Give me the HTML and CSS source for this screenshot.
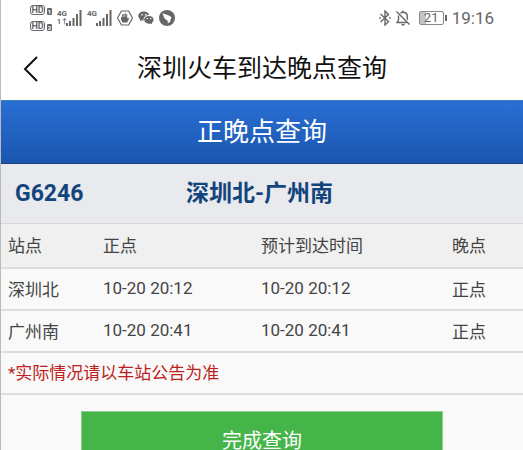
FILE: index.html
```html
<!DOCTYPE html>
<html lang="zh-CN">
<head>
  <meta charset="UTF-8">
  <meta name="viewport" content="width=device-width, initial-scale=1.0">
  <title>深圳火车到达晚点查询</title>
  <link rel="stylesheet" href="styles.css">
</head>
<body>

<div class="status-bar">
  <div class="status-group">
    <!-- HD voice, SIM 1 and 2 -->
    <div class="hd-list">
      <div class="hd"><span class="hd-label">HD</span><span class="hd-sim">1</span></div>
      <div class="hd"><span class="hd-label">HD</span><span class="hd-sim">2</span></div>
    </div>
    <div class="signal">
      <div class="net"><span>4G</span><span class="net-data">1↑</span></div>
      <svg width="16" height="16" viewBox="0 0 16 16" fill="#666"><path d="M0 13h2v3H0zM3 11h2v5H3zM6.500 8h2v8h-2zM10 4h2v12h-2zM13.500 0h2v16h-2z"/></svg>
    </div>
    <div class="signal">
      <div class="net"><span>4G</span></div>
      <svg width="16" height="16" viewBox="0 0 16 16" fill="#666"><path d="M0 13h2v3H0zM3 11h2v5H3zM6.500 8h2v8h-2zM10 4h2v12h-2zM13.500 0h2v16h-2z"/></svg>
    </div>
    <!-- hand -->
    <svg width="16" height="16" viewBox="0 0 16 16"><path d="M4.400 1h7.200L15.500 8l-3.900 7H4.400L.5 8z" fill="none" stroke="#666" stroke-width="1.200" stroke-linejoin="round"/><path d="M5.500 12.500C4.500 11.300 4 9.800 4 7.500c0-.8.900-.8 1.100 0V4.800c0-.6.900-.6.900 0V7h.4V3.900c0-.7 1-.7 1 0V7h.4V3.700c0-.7 1-.7 1 0V7h.4V4.300c0-.7 1-.7 1 0v4.200c.5-1 1.800-1.200 1.700-.2-.3 1.700-.8 3.200-1.800 4.200z" fill="#666"/></svg>
    <!-- wechat -->
    <svg width="16" height="14" viewBox="0 0 16 14" fill="#666"><path d="M6 .5C2.700.5.3 2.500.3 5c0 1.500.8 2.700 2 3.500L1.800 10.200l2-1c.6.2 1.200.3 1.900.3C5 6.600 7.500 4 11.300 4.100 10.700 2 8.600.5 6 .5z"/><path d="M10.900 4.900c-2.700 0-4.700 1.700-4.700 3.900s2 3.900 4.700 3.900c.6 0 1.100-.1 1.600-.2l1.700.9-.4-1.500c1.100-.8 1.800-1.900 1.800-3.100 0-2.200-2-3.900-4.700-3.900z"/><path d="M3.400 3h1.400v1.400H3.400zM7 3h1.400v1.400H7zM8.700 7h1.200v1.200H8.700zM12 7h1.200v1.200H12z" fill="#fff"/></svg>
    <svg width="16" height="16" viewBox="0 0 16 16"><circle cx="8" cy="8" r="8" fill="#666"/><path d="M3.700 3.200c2.500 1.500 5.500 1.300 8.200 3.600.8.700.4 1.600-.1 2.500l-1 1.400h1.300l-3.500 3 .8-2.200H8l.6-1.200C6.200 9.900 4.500 7.200 3.700 3.200z" fill="#fff"/></svg>
  </div>
  <div class="status-group status-right">
    <svg width="12" height="16" viewBox="0 0 12 16" fill="none" stroke="#666" stroke-width="1.400"><path d="M1.500 4l8 7.500L6 15V1l3.500 3.500L1.500 12"/><path d="M.2 8h1.600M10.200 8h1.600"/></svg>
    <svg width="16" height="16" viewBox="0 0 16 16" fill="none" stroke="#666" stroke-width="1.400"><path d="M1.500 1.500l13 13M3.500 5.500V10L2 12.500h9.500M5.500 3.200C6.300 2.500 7 2.300 8 2.300c2.700 0 4.300 1.900 4.300 4.200v3.200M8 .5v1.800M6.500 14.700h3"/></svg>
    <div class="battery"><span>21</span></div>
    <span class="clock">19:16</span>
  </div>
</div>

<header class="nav-bar">
  <a class="back" href="#" aria-label="返回">
    <svg width="16" height="26" viewBox="0 0 16 26" fill="none" stroke="#111" stroke-width="2"><path d="M14 1L2 13l12 12"/></svg>
  </a>
  <h1>深圳火车到达晚点查询</h1>
</header>

<main>
  <h2 class="banner">正晚点查询</h2>

  <div class="train">
    <span class="train-no">G6246</span>
    <span class="train-route">深圳北-广州南</span>
  </div>

  <table>
    <thead>
      <tr>
        <th class="col-station">站点</th>
        <th class="col-time">正点</th>
        <th class="col-expected">预计到达时间</th>
        <th>晚点</th>
      </tr>
    </thead>
    <tbody>
      <tr>
        <td>深圳北</td>
        <td>10-20 20:12</td>
        <td>10-20 20:12</td>
        <td>正点</td>
      </tr>
      <tr>
        <td>广州南</td>
        <td>10-20 20:41</td>
        <td>10-20 20:41</td>
        <td>正点</td>
      </tr>
    </tbody>
  </table>
  <p class="notice">*实际情况请以车站公告为准</p>

  <div class="actions">
    <button type="button" class="btn-done">完成查询</button>
  </div>
</main>

</body>
</html>
```

FILE: styles.css
```css
* {
  box-sizing: border-box;
}
body {
  margin: 0;
  height: 100vh;
  overflow: hidden;
  border-left: 1px solid #bbb;
  background-color: #f9f9f9;
  color: #444;
  font-family: Roboto, "Noto Sans CJK SC", sans-serif;
  font-size: 17px;
}
svg {
  display: block;
  flex-shrink: 0;
}

/* Status bar */
.status-bar {
  display: flex;
  justify-content: space-between;
  align-items: center;
  height: 36px;
  padding: 0 29px;
  background-color: #fff;
  color: #666;
}
.status-group {
  display: flex;
  align-items: center;
  gap: 5px;
}
.hd-list {
  display: flex;
  flex-direction: column;
  gap: 6px;
}
.hd {
  display: flex;
  align-items: flex-end;
  gap: 2px;
}
.hd-label {
  width: 15px;
  height: 10px;
  border: 1px solid #666;
  border-radius: 3px;
  font-size: 9px;
  font-weight: bold;
  line-height: 8px;
  text-align: center;
}
.hd-sim {
  width: 5px;
  height: 7px;
  border-radius: 1px;
  background-color: #666;
  color: #fff;
  font-size: 6px;
  font-weight: bold;
  line-height: 7px;
  text-align: center;
}
.signal {
  display: flex;
}
.net {
  display: flex;
  flex-direction: column;
  width: 9px;
  font-size: 8px;
  font-weight: bold;
  line-height: 8px;
}
.net-data {
  font-size: 7px;
}
.status-right {
  gap: 4px;
}
.battery {
  position: relative;
  width: 25px;
  height: 14px;
  margin: 0 4px;
  border: 1px solid #888;
  border-radius: 2px;
  background: linear-gradient(to right, #c4c4c4 6px, #fff 6px);
  font-size: 13px;
  line-height: 12px;
  text-align: center;
}
.battery::after {
  content: "";
  position: absolute;
  top: 3px;
  right: -4px;
  width: 2px;
  height: 6px;
  background-color: #666;
}
.clock {
  font-size: 17px;
}

/* Title */
.nav-bar {
  display: grid;
  grid-template-columns: 60px 1fr 60px;
  align-items: center;
  height: 64px;
  padding-top: 2px;
  background-color: #fff;
}
.back {
  padding-left: 22px;
}
.nav-bar h1 {
  margin: 0;
  color: #111;
  font-size: 25px;
  font-weight: normal;
  line-height: 36px;
  text-align: center;
}

.banner {
  margin: 0;
  border-top: 1px solid #3e7cbf;
  border-bottom: 1px solid #163f7c;
  background: linear-gradient(#296fd3, #1a55b0);
  color: #fff;
  font-size: 26px;
  font-weight: normal;
  line-height: 62px;
  text-align: center;
}
.train {
  display: flex;
  align-items: center;
  padding-left: 14px;
  border-bottom: 1px solid #d8d8da;
  background-color: #e9eaee;
  color: #12457c;
  font-size: 23px;
  font-weight: bold;
  line-height: 59px;
}
.train-no {
  width: 171px;
}

table {
  width: 100%;
  border-collapse: collapse;
  table-layout: fixed;
}
th, td {
  height: 42px;
  padding: 0 0 2px 7px;
  border-bottom: 2px solid #ddd;
  font-weight: normal;
  text-align: left;
}
th {
  height: 44px;
  background-color: #f0f0f0;
}
.col-station {
  width: 95px;
}
.col-time {
  width: 158px;
}
.col-expected {
  width: 191px;
}
.notice {
  margin: 0;
  padding-left: 7px;
  border-bottom: 2px solid #ddd;
  color: #bd1e20;
  line-height: 40px;
}

.actions {
  padding: 16px 80px;
}
.btn-done {
  width: 100%;
  height: 56px;
  border: 1px solid #8fcf90;
  background-color: #45b549;
  color: #fff;
  font-family: inherit;
  font-size: 20px;
  cursor: pointer;
}
```
